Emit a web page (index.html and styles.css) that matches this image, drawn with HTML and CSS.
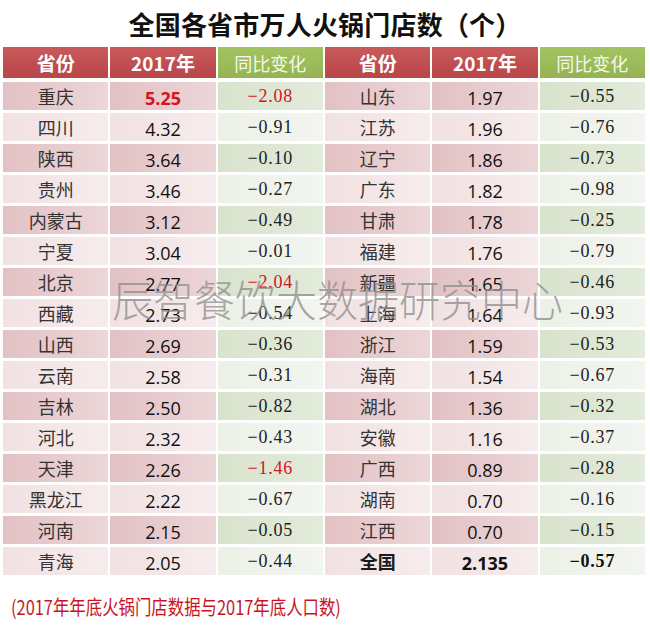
FILE: index.html
```html
<!DOCTYPE html>
<html lang="zh-CN">
<head>
<meta charset="utf-8">
<title>全国各省市万人火锅门店数</title>
<link rel="stylesheet" href="styles.css">
</head>
<body>
<div class="page">
  <h1 class="title">全国各省市万人火锅门店数（个）</h1>
  <div class="table">
    <div class="row head">
      <div class="hd red">省份</div><div class="hd red">2017年</div><div class="hd green">同比变化</div>
      <div class="hd red">省份</div><div class="hd red">2017年</div><div class="hd green">同比变化</div>
    </div>
    <div class="row dark">
      <div class="cell name">重庆</div><div class="cell num hot">5.25</div><div class="cell chg neg">−2.08</div>
      <div class="cell name">山东</div><div class="cell num">1.97</div><div class="cell chg">−0.55</div>
    </div>
    <div class="row light">
      <div class="cell name">四川</div><div class="cell num">4.32</div><div class="cell chg">−0.91</div>
      <div class="cell name">江苏</div><div class="cell num">1.96</div><div class="cell chg">−0.76</div>
    </div>
    <div class="row dark">
      <div class="cell name">陕西</div><div class="cell num">3.64</div><div class="cell chg">−0.10</div>
      <div class="cell name">辽宁</div><div class="cell num">1.86</div><div class="cell chg">−0.73</div>
    </div>
    <div class="row light">
      <div class="cell name">贵州</div><div class="cell num">3.46</div><div class="cell chg">−0.27</div>
      <div class="cell name">广东</div><div class="cell num">1.82</div><div class="cell chg">−0.98</div>
    </div>
    <div class="row dark">
      <div class="cell name">内蒙古</div><div class="cell num">3.12</div><div class="cell chg">−0.49</div>
      <div class="cell name">甘肃</div><div class="cell num">1.78</div><div class="cell chg">−0.25</div>
    </div>
    <div class="row light">
      <div class="cell name">宁夏</div><div class="cell num">3.04</div><div class="cell chg">−0.01</div>
      <div class="cell name">福建</div><div class="cell num">1.76</div><div class="cell chg">−0.79</div>
    </div>
    <div class="row dark">
      <div class="cell name">北京</div><div class="cell num">2.77</div><div class="cell chg neg">−2.04</div>
      <div class="cell name">新疆</div><div class="cell num">1.65</div><div class="cell chg">−0.46</div>
    </div>
    <div class="row light">
      <div class="cell name">西藏</div><div class="cell num">2.73</div><div class="cell chg">−0.54</div>
      <div class="cell name">上海</div><div class="cell num">1.64</div><div class="cell chg">−0.93</div>
    </div>
    <div class="row dark">
      <div class="cell name">山西</div><div class="cell num">2.69</div><div class="cell chg">−0.36</div>
      <div class="cell name">浙江</div><div class="cell num">1.59</div><div class="cell chg">−0.53</div>
    </div>
    <div class="row light">
      <div class="cell name">云南</div><div class="cell num">2.58</div><div class="cell chg">−0.31</div>
      <div class="cell name">海南</div><div class="cell num">1.54</div><div class="cell chg">−0.67</div>
    </div>
    <div class="row dark">
      <div class="cell name">吉林</div><div class="cell num">2.50</div><div class="cell chg">−0.82</div>
      <div class="cell name">湖北</div><div class="cell num">1.36</div><div class="cell chg">−0.32</div>
    </div>
    <div class="row light">
      <div class="cell name">河北</div><div class="cell num">2.32</div><div class="cell chg">−0.43</div>
      <div class="cell name">安徽</div><div class="cell num">1.16</div><div class="cell chg">−0.37</div>
    </div>
    <div class="row dark">
      <div class="cell name">天津</div><div class="cell num">2.26</div><div class="cell chg neg">−1.46</div>
      <div class="cell name">广西</div><div class="cell num">0.89</div><div class="cell chg">−0.28</div>
    </div>
    <div class="row light">
      <div class="cell name">黑龙江</div><div class="cell num">2.22</div><div class="cell chg">−0.67</div>
      <div class="cell name">湖南</div><div class="cell num">0.70</div><div class="cell chg">−0.16</div>
    </div>
    <div class="row dark">
      <div class="cell name">河南</div><div class="cell num">2.15</div><div class="cell chg">−0.05</div>
      <div class="cell name">江西</div><div class="cell num">0.70</div><div class="cell chg">−0.15</div>
    </div>
    <div class="row light">
      <div class="cell name">青海</div><div class="cell num">2.05</div><div class="cell chg">−0.44</div>
      <div class="cell name total">全国</div><div class="cell num strong">2.135</div><div class="cell chg strong">−0.57</div>
    </div>
    <div class="watermark">辰智餐饮大数据研究中心</div>
  </div>
  <p class="note"><span class="note-text">(2017年年底火锅门店数据与2017年底人口数)</span></p>
</div>
</body>
</html>
```

FILE: styles.css
```css
html, body {
  margin: 0;
  padding: 0;
  background: #ffffff;
}

.page {
  width: 650px;
  height: 633px;
  font-family: "Noto Sans CJK SC", "Noto Sans", sans-serif;
  color: #222;
}

.title {
  margin: 0;
  padding-top: 9px;
  height: 38px;
  line-height: 30px;
  font-size: 26px;
  font-weight: 700;
  text-align: center;
  color: #111;
  letter-spacing: 0.2px;
}

.table {
  position: relative;
  margin-left: 3px;
  width: 642px;
  display: flex;
  flex-direction: column;
  gap: 3px;
}

.row {
  display: grid;
  grid-template-columns: repeat(6, 1fr);
  column-gap: 2px;
  height: 28px;
}

.row.head {
  height: 31px;
  margin-bottom: 1px;
}

.hd {
  display: flex;
  align-items: center;
  justify-content: center;
  font-size: 19px;
  color: #ffffff;
}

.hd.red {
  background: linear-gradient(to bottom, #c95a5c 0%, #bf4d4f 60%, #b94749 100%);
  font-weight: 700;
}

.hd.green {
  background: linear-gradient(to bottom, #a3c262 0%, #9bbb59 60%, #93b352 100%);
  font-size: 18px;
  font-weight: 400;
  color: #f4f8ec;
}

.cell {
  display: flex;
  align-items: center;
  justify-content: center;
}

.row.dark .name,
.row.dark .num {
  background: linear-gradient(to right, #e2c1c4, #ecd6d8);
}

.row.light .name,
.row.light .num {
  background: linear-gradient(to right, #f1e1e2, #f7eced);
}

.row.dark .chg {
  background: linear-gradient(to right, #d8e3cd, #e3ebdb);
}

.row.light .chg {
  background: linear-gradient(to right, #ecf1e7, #f3f5f0);
}

.name {
  font-size: 18px;
  font-weight: 400;
  color: #333;
}

.name.total {
  font-weight: 700;
  color: #1a1a1a;
}

.num {
  font-family: "Open Sans", "Liberation Sans", sans-serif;
  font-size: 18px;
  color: #111;
  padding-top: 4px;
}

.num.hot {
  color: #d7141c;
  font-weight: 700;
}

.num.strong {
  font-weight: 700;
}

.chg {
  font-family: "Liberation Serif", "DejaVu Serif", serif;
  font-size: 18px;
  letter-spacing: 0.8px;
  color: #222;
}

.chg.neg {
  color: #d7141c;
}

.chg.strong {
  font-weight: 700;
  color: #111;
}

.watermark {
  position: absolute;
  left: 109px;
  top: 230px;
  font-size: 41px;
  line-height: 41px;
  font-weight: 200;
  color: rgba(140, 140, 140, 0.75);
  white-space: nowrap;
  pointer-events: none;
  transform: scaleY(1.06);
  transform-origin: left top;
}

.note {
  margin: 19px 0 0 0;
  padding-left: 11px;
  line-height: 26px;
}

.note-text {
  display: inline-block;
  font-size: 20px;
  color: #c8141e;
  white-space: nowrap;
  transform: scaleX(0.82);
  transform-origin: left center;
}
```
